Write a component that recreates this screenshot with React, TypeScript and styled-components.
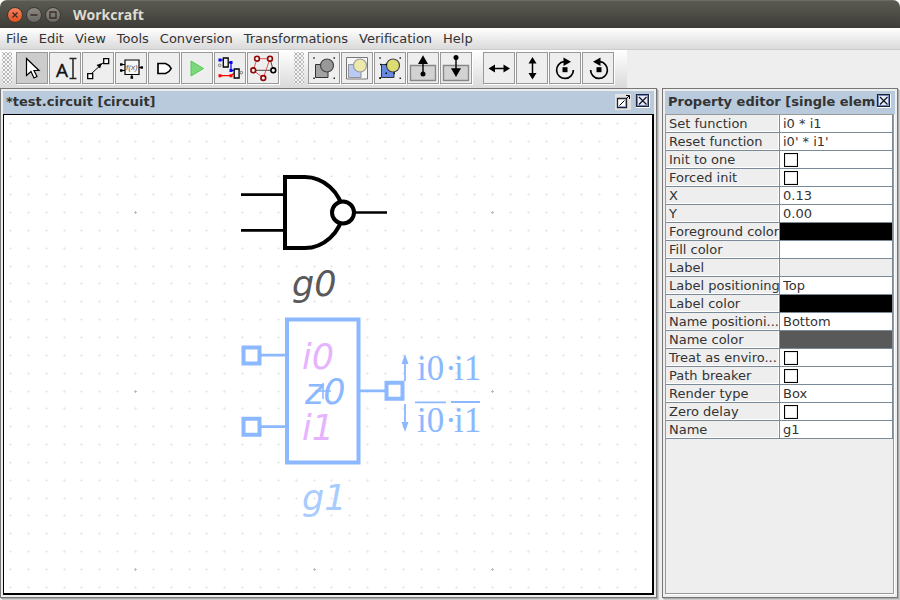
import React from "react";
import styled, { createGlobalStyle } from "styled-components";

const GlobalStyle = createGlobalStyle`
  * { box-sizing: border-box; }
  html, body, #root { height: 100%; margin: 0; }
  body { background: #fff; font: 13px/18px "DejaVu Sans", sans-serif; color: #333; overflow: hidden; }
  button, input, select { font: inherit; color: inherit; margin: 0; padding: 0; border: 0; border-radius: 0; }
`;

const Window = styled.div`
  display: flex;
  flex-direction: column;
  height: 100vh;
  background: #eee;
  border-radius: 7px 7px 0 0;
  overflow: hidden;
`;

const TitleBar = styled.header`
  display: flex;
  align-items: center;
  flex: none;
  height: 28px;
  padding: 0 7px;
  gap: 3px;
  background: linear-gradient(#5b5a52, #3d3c37);
  border-top: 1px solid #6b6a63;
`;

const WindowButton = styled.button<{ $close?: boolean }>`
  display: flex;
  width: 16px;
  height: 16px;
  border-radius: 50%;
  border: 1px solid #3a3935;
  background: ${(p) => (p.$close ? "linear-gradient(#f58360, #e2501f)" : "linear-gradient(#8b8981, #6a6963)")};
`;

const Title = styled.h1`
  margin: 0 0 0 9px;
  font: bold 14px/18px "Open Sans", sans-serif;
  color: #dfdbd2;
`;

const MenuBar = styled.nav`
  display: flex;
  flex: none;
  gap: 1px;
  height: 22px;
  padding: 0 1px;
  background: linear-gradient(#fff, #dadada);
  border-bottom: 1px solid #ccc;
`;

const MenuButton = styled.button`
  padding: 0 5px;
  background: none;
  white-space: nowrap;
`;

const ToolArea = styled.div`
  display: flex;
  flex: none;
  height: 38px;
`;

const ToolBar = styled.div`
  display: flex;
  align-items: flex-start;
  gap: 1px;
  padding: 2px 13px 0 2px;
  background: linear-gradient(#fff, #dadada);
`;

const Handle = styled.span`
  width: 10px;
  height: 32px;
  margin-right: 3px;
  background:
    radial-gradient(circle, #b4b4b4 34%, transparent 38%) 0 0 / 4px 4px,
    radial-gradient(circle, #c4c4c4 34%, transparent 38%) 2px 2px / 4px 4px, #f6f6f6;
`;

const ToolGap = styled.span`
  width: 9px;
`;

const ToolButton = styled.button<{ $active?: boolean }>`
  display: flex;
  width: 32px;
  height: 32px;
  border: 1px solid #999;
  box-shadow: 1px 1px #fff;
  background: ${(p) => (p.$active ? "#ccc" : "#eee")};
`;

const Workspace = styled.main`
  display: flex;
  flex: 1;
  min-height: 0;
  gap: 5px;
  padding: 0 2px 2px 0;
`;

const Frame = styled.section<{ $side?: boolean }>`
  display: flex;
  flex-direction: column;
  min-width: 0;
  min-height: 0;
  flex: ${(p) => (p.$side ? "0 0 236px" : "1")};
  padding: 2px;
  border: 1px solid #777;
  box-shadow: 1px 1px #aaa, 2px 2px #ccc;
  background: #eee;
`;

const FrameHeader = styled.div`
  display: flex;
  flex: none;
  align-items: center;
  height: 23px;
  padding: 0 3px 1px 3px;
  background: #b8cadb;
`;

const FrameTitle = styled.h2`
  flex: 1;
  min-width: 0;
  margin: 0;
  overflow: hidden;
  white-space: nowrap;
  font: bold 13px/18px "DejaVu Sans", sans-serif;
`;

const HeaderButton = styled.button<{ $spaced?: boolean }>`
  display: flex;
  flex: none;
  width: 16px;
  height: 16px;
  margin-right: ${(p) => (p.$spaced ? "4px" : "0")};
  background: ${(p) => (p.$spaced ? "#e3e3e3" : "none")};
`;

const Canvas = styled.div`
  flex: 1;
  min-height: 0;
  background: #fff;
  border: solid #000;
  border-width: 1px 2px 2px 1px;
  overflow: hidden;
`;

const Drawing = styled.svg`
  display: block;
  width: 100%;
  height: 100%;
`;

const PropertyPane = styled.div`
  flex: 1;
  min-height: 0;
  margin: 0 1px 1px 0;
  border: 1px solid #999;
  box-shadow: 1px 1px #fff;
  overflow: hidden;
`;

const PropertyTable = styled.table`
  width: 100%;
  table-layout: fixed;
  border-collapse: separate;
  border-spacing: 0;
`;

const NameCell = styled.th`
  width: 114px;
  height: 18px;
  padding: 0 0 0 3px;
  font-weight: normal;
  text-align: left;
  line-height: 17px;
  white-space: nowrap;
  overflow: hidden;
  border: solid #7a8a99;
  border-width: 0 1px 1px 0;
  box-shadow: inset -1px -1px #fff;
`;

const ValueCell = styled.td`
  height: 18px;
  padding: 0;
  line-height: 17px;
  background: #fff;
  border: solid #7a8a99;
  border-width: 0 1px 1px 0;
`;

const TextValue = styled.input<{ $empty?: boolean }>`
  display: block;
  width: 100%;
  height: 17px;
  padding: 0 3px;
  background: ${(p) => (p.$empty ? "#eee" : "#fff")};
`;

const ChoiceValue = styled.select`
  display: block;
  appearance: none;
  width: 100%;
  height: 17px;
  padding: 0 3px;
  background: #fff;
`;

const ColorValue = styled.button<{ $color: string }>`
  display: block;
  width: 100%;
  height: 17px;
  background: ${(p) => p.$color};
`;

const CheckValue = styled.input`
  display: block;
  appearance: none;
  width: 14px;
  height: 14px;
  margin: 2px 0 1px 4px;
  border: 1px solid #000;
  box-shadow: inset 0 0 0 1px #e8e8e8;
  background: #fff;
`;

type Property = { name: string; kind: "text" | "check" | "color" | "choice"; value?: string };

const properties: Property[] = [
  { name: "Set function", kind: "text", value: "i0 * i1" },
  { name: "Reset function", kind: "text", value: "i0' * i1'" },
  { name: "Init to one", kind: "check" },
  { name: "Forced init", kind: "check" },
  { name: "X", kind: "text", value: "0.13" },
  { name: "Y", kind: "text", value: "0.00" },
  { name: "Foreground color", kind: "color", value: "#000" },
  { name: "Fill color", kind: "color", value: "#fff" },
  { name: "Label", kind: "text", value: "" },
  { name: "Label positioning", kind: "choice", value: "Top" },
  { name: "Label color", kind: "color", value: "#000" },
  { name: "Name positioni...", kind: "choice", value: "Bottom" },
  { name: "Name color", kind: "color", value: "#595959" },
  { name: "Treat as enviro...", kind: "check" },
  { name: "Path breaker", kind: "check" },
  { name: "Render type", kind: "choice", value: "Box" },
  { name: "Zero delay", kind: "check" },
  { name: "Name", kind: "text", value: "g1" },
];

function PropertyRow({ property }: { property: Property }) {
  const id = "prop-" + property.name.toLowerCase().replace(/[^a-z]+/g, "-");
  const { kind, value = "" } = property;
  return (
    <tr>
      <NameCell scope="row">
        <label htmlFor={id}>{property.name}</label>
      </NameCell>
      <ValueCell>
        {kind === "text" && <TextValue id={id} defaultValue={value} $empty={!value} />}
        {kind === "check" && <CheckValue id={id} type="checkbox" />}
        {kind === "color" && <ColorValue id={id} type="button" $color={value} />}
        {kind === "choice" && (
          <ChoiceValue id={id} defaultValue={value}>
            <option>{value}</option>
          </ChoiceValue>
        )}
      </ValueCell>
    </tr>
  );
}

const Icon = ({ children }: { children: React.ReactNode }) => (
  <svg width="30" height="30" viewBox="0 0 30 30" fill="none" stroke="#000" aria-hidden="true">
    {children}
  </svg>
);

const Corners = () => (
  <path d="M4.300 5h1.500M24.500 5h1.500M4.300 25.300h1.500M24.500 25.300h1.500" stroke="#222" strokeWidth="1.500" />
);

const editTools = [
  {
    label: "Select",
    icon: <path d="M9.500 5.500v17l4.500-4 3 6.500 3-1.500-3-6h5z" fill="#fff" strokeWidth="1.200" />,
  },
  {
    label: "Text note",
    icon: (
      <>
        <text x="6" y="23.500" fontSize="19" fontFamily="Open Sans, sans-serif" fill="#111" stroke="#111" strokeWidth="0.400">A</text>
        <path d="M19.500 5.500h7M19.500 25.500h7M23 6v19" stroke="#222" strokeWidth="1.500" />
      </>
    ),
  },
  {
    label: "Connect",
    icon: (
      <>
        <path d="M8 21L21 9" />
        <path d="M19 10l-5.500 2 3.500 3.500z" fill="#000" stroke="none" />
        <path d="M4.700 20.700h5v5h-5zM20.700 5.700h5v5h-5z" fill="#fff" strokeWidth="1.300" />
      </>
    ),
  },
  {
    label: "Function component",
    icon: (
      <>
        <path d="M5 11.500h4M5 17.500h4M23 14.500h3M15.800 21v3" strokeWidth="1.200" />
        <path d="M4 10.200h2.500v2.600H4zM4 16.200h2.500v2.600H4zM24.500 13.200H27v2.600h-2.500zM14.500 23.200h2.600v2.500h-2.600z" fill="#000" stroke="none" />
        <path d="M9 7h14v14.500H9z" fill="#f7f7f7" strokeWidth="1.200" />
        <text x="10" y="17" fontSize="8" fontStyle="italic" fontFamily="Liberation Sans, sans-serif" fill="#555" stroke="none">f(x)</text>
      </>
    ),
  },
  {
    label: "Port",
    icon: <path d="M9 10.500h7.500q4 1.500 5.700 5q-1.700 3.500-5.700 5H9z" fill="#fff" strokeWidth="1.700" />,
  },
  {
    label: "Simulation",
    icon: <path d="M9 8l12.500 7.500L9 23z" fill="#7bd97b" stroke="#55c855" />,
  },
  {
    label: "Initialisation analyser",
    icon: (
      <>
        <path d="M5 7h4M13.500 9.500h2.500v8h3" stroke="#00f" strokeWidth="1.200" />
        <path d="M3.500 5.500h3v3h-3zM14.500 8h3v3h-3zM14.500 16h3v3h-3z" fill="#00f" stroke="none" />
        <path d="M5 22.700h11l3-2.500" stroke="#f00" strokeWidth="1.200" />
        <path d="M3.500 21.200h3v3h-3zM14.500 21.200h3v3h-3z" fill="#f00" stroke="none" />
        <path d="M8.300 5h4.900v9H8.300zM19.200 16h4.900v9h-4.900z" fill="#eee" strokeWidth="1.300" />
        <circle cx="4.700" cy="12.300" r="1.300" stroke="#777" />
        <circle cx="26.300" cy="19.700" r="1.300" stroke="#777" />
      </>
    ),
  },
  {
    label: "Cycle analyser",
    icon: (
      <>
        <path d="M5.300 17.300h20L22 5.700" strokeWidth="0.900" stroke="#333" />
        <path d="M5.300 17.300L9 5.700h13L15.300 25 5.300 17.300" stroke="#d44" strokeWidth="0.900" />
        <g stroke="#8f0505" strokeWidth="1.600" fill="#eee">
          <circle cx="9" cy="5.700" r="2.400" />
          <circle cx="22" cy="5.700" r="2.400" />
          <circle cx="5.300" cy="17.300" r="2.400" />
          <circle cx="15.300" cy="25" r="2.400" />
        </g>
        <circle cx="25.300" cy="17.300" r="2.400" strokeWidth="1.600" fill="#eee" />
      </>
    ),
  },
];

const groupShapes = (square: string, circle: string) => (
  <>
    <path d="M6.500 11.500h12.500v13H6.500z" fill={square} stroke="#333" />
    <circle cx="18" cy="12.500" r="6.500" fill={circle} stroke="#444" strokeWidth="1.200" />
  </>
);

const levelTray = <path d="M2.500 12.500h25v15h-25z" fill="#d2d2d2" stroke="#888" strokeWidth="1.400" />;

const groupTools = [
  { label: "Group selection", icon: <>{groupShapes("#a3a3a3", "#989898")}<Corners /></> },
  {
    label: "Combine into page",
    icon: (
      <>
        <path d="M4.500 4.500h21v21.500h-21z" fill="#f6f6f6" stroke="#777" />
        <g opacity="0.500">{groupShapes("#7f9ff5", "#e4e060")}</g>
      </>
    ),
  },
  {
    label: "Ungroup selection",
    icon: (
      <>
        {groupShapes("#668ae0", "#dcdc72")}
        <Corners />
        <path d="M10.500 20.300h1.500M18.500 20.300h1.500M5 11.500h1.500M10.500 11.500h1.500M4.500 25h1.500" strokeWidth="1.500" />
      </>
    ),
  },
  {
    label: "Level up",
    icon: (
      <>
        {levelTray}
        <path d="M15 20.500V10" strokeWidth="1.400" />
        <circle cx="15" cy="21" r="2.500" fill="#000" stroke="none" />
        <path d="M15 2.300l5 8.700H10z" fill="#000" stroke="none" />
      </>
    ),
  },
  {
    label: "Level down",
    icon: (
      <>
        {levelTray}
        <path d="M15 5v12" strokeWidth="1.400" />
        <circle cx="15" cy="4.500" r="2.500" fill="#000" stroke="none" />
        <path d="M15 24l5-8.700H10z" fill="#000" stroke="none" />
      </>
    ),
  },
];

const rotation = (
  <>
    <path d="M14 8.700A8.400 8.400 0 1 0 23.400 17" strokeWidth="1.700" />
    <path d="M13.500 4.500v8.500l7.500-4.300z" fill="#000" stroke="none" />
    <path d="M12.500 14.200h5v5h-5z" fill="#000" stroke="none" />
  </>
);

const transformTools = [
  {
    label: "Flip horizontal",
    icon: (
      <>
        <path d="M7 15.500h17" strokeWidth="1.500" />
        <path d="M4.500 15.500l6.500-4v8zM26 15.500l-6.500-4v8z" fill="#000" stroke="none" />
      </>
    ),
  },
  {
    label: "Flip vertical",
    icon: (
      <>
        <path d="M15.500 7v17" strokeWidth="1.500" />
        <path d="M15.500 4l4 6.500h-8zM15.500 26.500l4-6.500h-8z" fill="#000" stroke="none" />
      </>
    ),
  },
  { label: "Rotate clockwise", icon: rotation },
  { label: "Rotate counterclockwise", icon: <g transform="translate(31 0) scale(-1 1)">{rotation}</g> },
];

function Tools({ items, active }: { items: { label: string; icon: React.ReactNode }[]; active?: number }) {
  return (
    <>
      {items.map((t, i) => (
        <ToolButton key={t.label} type="button" aria-label={t.label} $active={i === active}>
          <Icon>{t.icon}</Icon>
        </ToolButton>
      ))}
    </>
  );
}

const DetachIcon = () => (
  <svg width="16" height="16" viewBox="0 0 16 16" fill="none" aria-hidden="true">
    <path d="M2.500 4.500h9v9h-9z" fill="#fff" stroke="#223" strokeWidth="1.300" />
    <path d="M3.500 12.500h7v-7" stroke="#8fa3dd" />
    <path d="M4.500 11.500l5-5M11 5l3-3" stroke="#000" />
    <path d="M11 1.500h3.500V5" stroke="#000" />
  </svg>
);

const CloseIcon = () => (
  <svg width="16" height="16" viewBox="0 1 16 16" fill="none" aria-hidden="true">
    <path d="M1.500 1.500h12v12h-12z" fill="#e4eaff" stroke="#223" strokeWidth="1.200" />
    <path d="M2.500 13V2.500H13M12.500 3v9.500H3" stroke="#7488bd" />
    <path d="M4 4l7.500 7.500M11.500 4L4 11.500" stroke="#111" strokeWidth="1.200" />
    <path d="M1 14.500h13.500V1" stroke="#fff" />
  </svg>
);

/* Grid points are rounded to whole pixels so every cross stays crisp. */
const GRID_STEP = 17.85;
const cross = (x: number, y: number) => `M${x - 1} ${y + 0.5}h3M${x + 0.5} ${y - 1}v3`;
const minorPoints: string[] = [];
const majorPoints: string[] = [];
for (let i = -8; i < 120; i++) {
  for (let j = -6; j < 80; j++) {
    const point = cross(Math.round(131 + i * GRID_STEP), Math.round(97 + j * GRID_STEP));
    (i % 10 === 0 && j % 10 === 0 ? majorPoints : minorPoints).push(point);
  }
}

const Schematic = () => (
  <Drawing role="img" aria-label="Circuit with gates g0 and g1">
    <path d={minorPoints.join("")} stroke="#ececec" shapeRendering="crispEdges" />
    <path d={majorPoints.join("")} stroke="#bdbdbd" shapeRendering="crispEdges" />
    <g transform="translate(-4 -115)" fill="none" fontFamily="DejaVu Sans, sans-serif" fontSize="35" fontStyle="italic">
      <g stroke="#000">
        <path d="M241 194.600h43M241 230.400h43M355 212.500h32" strokeWidth="2.700" />
        <path d="M285 177h20c18 0 36 15 38 35.500c-2 20.500-20 35.500-38 35.500h-20z" fill="#fff" strokeWidth="4" />
        <circle cx="343" cy="212.500" r="11" fill="#fff" strokeWidth="4" />
      </g>
      <text x="292" y="296" fill="#595959">g0</text>
      <g stroke="#8cb8ff">
        <path d="M261 355.200h25M261 426.700h25M360 390.800h26" strokeWidth="2.700" />
        <path d="M287 319.500h71.500v143H287z" fill="#fff" strokeWidth="4" />
        <path d="M243.500 347.500h16v16h-16zM243.500 418.800h16v16h-16zM386.500 382.800h16v16h-16z" fill="#fff" strokeWidth="4" />
        <path d="M323 383v16M315 391h16" strokeWidth="1.500" />
        <path d="M405 381v-20M405 404v20" strokeWidth="1.800" />
        <path d="M415 402.300h31M451 402h29" strokeWidth="1.800" />
      </g>
      <path d="M405 354l3.500 10h-7zM405 432l3.500-10h-7z" fill="#8cb8ff" />
      <g fill="#e6b3ff">
        <text x="302" y="369">i0</text>
        <text x="302" y="440">i1</text>
      </g>
      <text x="305" y="404" fill="#8cb8ff">z0</text>
      <text x="302" y="510" fill="#a9ccff">g1</text>
      <g fill="#8cb8ff" fontFamily="Liberation Serif, serif" fontStyle="normal">
        <text x="417" y="380">i0</text>
        <text x="445" y="380">·</text>
        <text x="454" y="380">i1</text>
        <text x="417" y="432">i0</text>
        <text x="445" y="432">·</text>
        <text x="454" y="432">i1</text>
      </g>
    </g>
  </Drawing>
);

const menus = ["File", "Edit", "View", "Tools", "Conversion", "Transformations", "Verification", "Help"];
const windowButtons = [
  { label: "Close window", d: "M4.500 4.500l5 5M9.500 4.500l-5 5" },
  { label: "Minimise", d: "M3.500 7h7" },
  { label: "Maximise", d: "M4 4h6v6H4z" },
];

export default function App() {
  return (
    <Window>
      <GlobalStyle />
      <TitleBar>
        {windowButtons.map((b, i) => (
          <WindowButton key={b.label} type="button" aria-label={b.label} $close={i === 0}>
            <svg width="14" height="14" viewBox="0 0 14 14" fill="none" stroke="#3a2c26" strokeWidth="1.300" aria-hidden="true">
              <path d={b.d} />
            </svg>
          </WindowButton>
        ))}
        <Title>Workcraft</Title>
      </TitleBar>
      <MenuBar>
        {menus.map((m) => (
          <MenuButton key={m} type="button">{m}</MenuButton>
        ))}
      </MenuBar>
      <ToolArea>
        <ToolBar role="toolbar" aria-label="Editing">
          <Handle />
          <Tools items={editTools} active={0} />
        </ToolBar>
        <ToolBar role="toolbar" aria-label="Arrangement">
          <Handle />
          <Tools items={groupTools} />
          <ToolGap />
          <Tools items={transformTools} />
        </ToolBar>
      </ToolArea>
      <Workspace>
        <Frame>
          <FrameHeader>
            <FrameTitle>*test.circuit [circuit]</FrameTitle>
            <HeaderButton type="button" aria-label="Detach" $spaced><DetachIcon /></HeaderButton>
            <HeaderButton type="button" aria-label="Close editor"><CloseIcon /></HeaderButton>
          </FrameHeader>
          <Canvas>
            <Schematic />
          </Canvas>
        </Frame>
        <Frame $side>
          <FrameHeader>
            <FrameTitle>Property editor [single elem</FrameTitle>
            <HeaderButton type="button" aria-label="Close property editor"><CloseIcon /></HeaderButton>
          </FrameHeader>
          <PropertyPane>
            <PropertyTable>
              <tbody>
                {properties.map((p) => (
                  <PropertyRow key={p.name} property={p} />
                ))}
              </tbody>
            </PropertyTable>
          </PropertyPane>
        </Frame>
      </Workspace>
    </Window>
  );
}
